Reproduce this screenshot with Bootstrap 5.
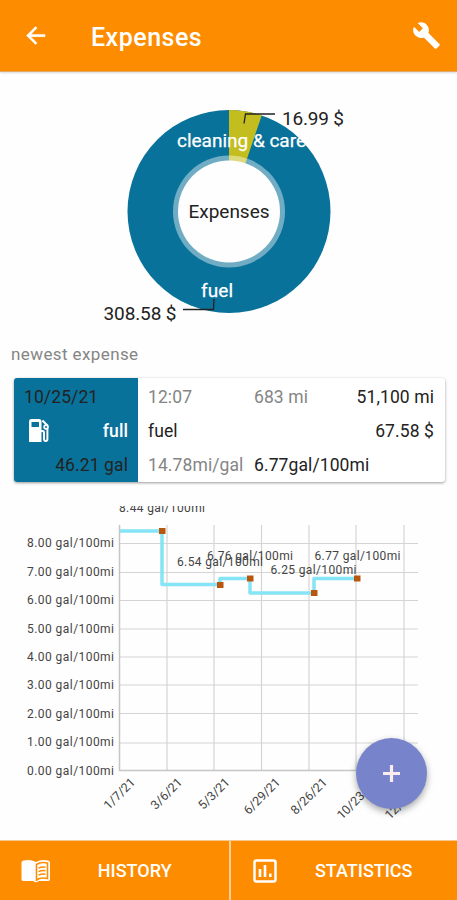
<!DOCTYPE html>
<html lang="en">
<head>
<meta charset="utf-8">
<meta name="viewport" content="width=device-width, initial-scale=1">
<title>Expenses</title>
<link href="https://cdn.jsdelivr.net/npm/bootstrap@5.3.0/dist/css/bootstrap.min.css" rel="stylesheet">
<style>
  body { font-family: Roboto, sans-serif; color: #222; background: #fefefe; }
  .screen { height: 900px; }
  .topbar { height: 72px; background: #fe8c00; border-bottom: 1px solid #e3a868; box-shadow: 0 1px 2px rgba(0,0,0,.15); padding: 0 16px 0 22px; }
  .topbar h1 { font-size: 25px; font-weight: 500; letter-spacing: .5px; margin: 3px 0 0 42px; line-height: 1; }
  .donut { height: 258px; }
  .donut svg, .trend svg { display: block; }
  .section-label { height: 48px; padding: 12px 11px 0; font-size: 17px; line-height: 24px; letter-spacing: .4px; color: #858585; }
  .expense { height: 104px; margin: 0 12px 0 14px; border-radius: 3px; font-size: 17.5px; line-height: 24px; letter-spacing: .1px; box-shadow: 0 1px 3px rgba(0,0,0,.4); }
  .when { width: 124px; background: #09729b; padding: 7px 10px 0 10px; border-radius: 3px 0 0 3px; }
  .line { height: 34px; }
  .detail { padding: 7px 11px 0 10px; }
  .dim { color: #858585; }
  .trip { width: 106px; }
  .trend { height: 356px; }
  .fab { width: 71px; height: 71px; right: 30px; top: 738px; background: #7784cb; box-shadow: 0 3px 7px rgba(0,0,0,.35); }
  .tabs { height: 60px; background: #fe8c00; border-top: 1px solid #f9c891; }
  .tabs a { font-size: 18px; font-weight: 500; }
  .tabs a + a { border-left: 2px solid #ffd09b; }
  .tabs .history { margin-right: 15px; }
  .tabs .statistics { margin-right: 6px; }
  .tabs .bars { margin-left: 22px; }
</style>
</head>
<body>
<main class="screen position-relative d-flex flex-column overflow-hidden">
  <header class="topbar d-flex align-items-center text-white flex-shrink-0">
    <svg width="27" height="27" viewBox="0 0 24 24" fill="#fff" stroke="#fff" stroke-width=".4" aria-label="Back"><path d="M20.500 11H7.830l5.590-5.590L12 4l-8 8 8 8 1.410-1.410L7.830 13H20.500z"/></svg>
    <h1>Expenses</h1>
    <svg class="ms-auto" width="29" height="29" viewBox="0 0 24 24" fill="#fff" aria-label="Settings"><path d="M22.7 19l-9.100-9.100c.9-2.300.4-5-1.500-6.900-2-2-5-2.400-7.400-1.300L9 6 6 9 1.600 4.700C.4 7.100.9 10.100 2.900 12.100c1.900 1.900 4.600 2.400 6.900 1.500l9.100 9.100c.4.4 1 .4 1.400 0l2.300-2.300c.5-.4.5-1.100.1-1.400z"/></svg>
  </header>

  <section class="donut flex-shrink-0">
    <svg width="457" height="258" viewBox="0 72 457 258" font-family="Roboto, sans-serif">
      <circle cx="229" cy="211.500" r="101.500" fill="#09729b"/>
      <path d="M229 211.500V110A101.500 101.500 0 0 1 261.700 115.400Z" fill="#c4bd20"/>
      <circle cx="229" cy="211.500" r="56" fill="#fff" fill-opacity=".42"/>
      <circle cx="229" cy="211.500" r="51" fill="#fefefe"/>
      <g fill="none" stroke="#222" stroke-width="1.300">
        <path d="M244 123.500L245.500 114H275"/>
        <path d="M214 299L213.500 309.500H183"/>
      </g>
      <g font-size="19" font-weight="400" fill="#fff" stroke="#fff" stroke-width=".25">
        <text x="177" y="147" textLength="129">cleaning &amp; care</text>
        <text x="201" y="297" textLength="32">fuel</text>
      </g>
      <g font-size="19" fill="#222">
        <text x="188.500" y="218" textLength="81">Expenses</text>
        <text x="282" y="124.500" textLength="62">16.99 $</text>
        <text x="103.500" y="319.500" textLength="73">308.58 $</text>
      </g>
    </svg>
  </section>

  <div class="section-label flex-shrink-0">newest expense</div>

  <article class="expense d-flex bg-white flex-shrink-0">
    <div class="when">
      <div class="line">10/25/21</div>
      <div class="line d-flex justify-content-between text-white">
        <svg width="28" height="28" viewBox="0 0 28 28" aria-label="Fuel pump">
          <path fill="#fff" fill-rule="evenodd" d="M7 0h8q2.500 0 2.500 2.500V23H5V2.500Q5 0 7 0zm.5 3v5h7.500V3z"/>
          <path fill="none" stroke="#fff" stroke-width="2" d="M17 12h1.500q1.500 0 1.500 2v6q0 2 1.700 2t1.700-2V6.500l-5-5"/>
          <circle cx="22" cy="8" r="2.700" fill="#fff"/>
          <circle cx="22" cy="8" r="1" fill="#09729b"/>
        </svg>
        <span class="fw-medium">full</span>
      </div>
      <div class="line text-end">46.21 gal</div>
    </div>
    <div class="detail flex-grow-1">
      <div class="line d-flex"><span class="dim trip">12:07</span><span class="dim">683 mi</span><span class="ms-auto">51,100 mi</span></div>
      <div class="line d-flex justify-content-between"><span>fuel</span><span>67.58 $</span></div>
      <div class="line d-flex"><span class="dim trip">14.78mi/gal</span><span>6.77gal/100mi</span></div>
    </div>
  </article>

  <section class="trend flex-shrink-0">
    <svg width="457" height="356" viewBox="0 482 457 356" font-family="Roboto, sans-serif" font-size="12" fill="#444">
      <defs><clipPath id="plotTop"><rect x="100" y="506" width="350" height="20"/></clipPath></defs>
      <path fill="none" stroke="#d4d4d4" stroke-width="1.200" d="M167 525V771M214 525V771M261.500 525V771M309 525V771M356 525V771M404 525V771M119 543.500H418M119 572.500H418M119 600.500H418M119 629H418M119 657H418M119 685H418M119 713.500H418M119 743H418"/>
      <path fill="none" stroke="#c6c6c6" stroke-width="1.500" d="M119.500 525V770.500H418"/>
      <g>
        <text x="27" y="547" textLength="87">8.00 gal/100mi</text>
        <text x="27" y="575.500" textLength="87">7.00 gal/100mi</text>
        <text x="27" y="604" textLength="87">6.00 gal/100mi</text>
        <text x="27" y="632.500" textLength="87">5.00 gal/100mi</text>
        <text x="27" y="661" textLength="87">4.00 gal/100mi</text>
        <text x="27" y="689" textLength="87">3.00 gal/100mi</text>
        <text x="27" y="717.500" textLength="87">2.00 gal/100mi</text>
        <text x="27" y="746" textLength="87">1.00 gal/100mi</text>
        <text x="27" y="774.500" textLength="87">0.00 gal/100mi</text>
      </g>
      <path fill="none" stroke="#85e4f5" stroke-width="3.500" stroke-linejoin="round" d="M120 531H162V584.500H220V578.500H250V593H314V578.500H357"/>
      <g fill="#b8560f">
        <rect x="159" y="528" width="6.500" height="6"/>
        <rect x="217" y="582" width="6.500" height="6"/>
        <rect x="247" y="575.500" width="6.500" height="6"/>
        <rect x="311" y="590" width="6.500" height="6"/>
        <rect x="354" y="575.500" width="6.500" height="6"/>
      </g>
      <g>
        <text x="119" y="512" textLength="86" clip-path="url(#plotTop)">8.44 gal/100mi</text>
        <text x="177" y="566" textLength="86">6.54 gal/100mi</text>
        <text x="207" y="559.500" textLength="86">6.76 gal/100mi</text>
        <text x="270.500" y="574" textLength="86">6.25 gal/100mi</text>
        <text x="314.500" y="559.500" textLength="86">6.77 gal/100mi</text>
      </g>
      <g text-anchor="end" font-size="12.500">
        <text transform="translate(136 783) rotate(-45)">1/7/21</text>
        <text transform="translate(183 783) rotate(-45)">3/6/21</text>
        <text transform="translate(230.500 783) rotate(-45)">5/3/21</text>
        <text transform="translate(281 783) rotate(-45)">6/29/21</text>
        <text transform="translate(328 783) rotate(-45)">8/26/21</text>
        <text transform="translate(379 783) rotate(-45)">10/23/21</text>
        <text transform="translate(427 783) rotate(-45)">12/20/21</text>
      </g>
    </svg>
  </section>

  <button class="fab btn border-0 p-0 rounded-circle position-absolute d-flex align-items-center justify-content-center" aria-label="Add expense">
    <svg width="17" height="17" viewBox="0 0 17 17" stroke="#fcecee" stroke-width="3.200"><path d="M8.500 0V17M0 8.500H17"/></svg>
  </button>

  <nav class="tabs row g-0 mt-auto flex-shrink-0 text-center">
    <a class="col-6 d-flex align-items-center text-white text-decoration-none" href="#">
      <svg class="ms-3" width="40" height="30" viewBox="0 0 40 30" aria-hidden="true">
        <path fill="#fff" d="M5.500 6.500q0-1.500 2-2 7-1.500 12.500 1.500 5-3 12-1.500 2 .5 2 2v17q0 1.500-2 1.500H23l-3 1.500L17 25H7.500q-2 0-2-1.500z"/>
        <path fill="none" stroke="#fe8c00" stroke-width="1.600" d="M20.500 8.500q4-3 11-1.500V22.500q-7-1.500-11 1.500z"/>
        <path fill="none" stroke="#fe8c00" stroke-width="1.400" d="M22.500 12.200q3-1.500 7-1M22.500 15.700q3-1.500 7-1M22.500 19.200q3-1.500 7-1"/>
      </svg>
      <span class="history flex-grow-1">HISTORY</span>
    </a>
    <a class="col-6 d-flex align-items-center text-white text-decoration-none" href="#">
      <svg class="bars" width="24" height="24" viewBox="0 0 24 24" aria-hidden="true">
        <rect x="1.500" y="1.500" width="21" height="21" rx="2" fill="none" stroke="#fff" stroke-width="2.500"/>
        <path stroke="#fff" stroke-width="2.600" d="M7 10v8M12 6v12M17.300 14.500v3.500"/>
      </svg>
      <span class="statistics flex-grow-1">STATISTICS</span>
    </a>
  </nav>
</main>
<script src="https://cdn.jsdelivr.net/npm/bootstrap@5.3.0/dist/js/bootstrap.bundle.min.js"></script>
</body>
</html>
